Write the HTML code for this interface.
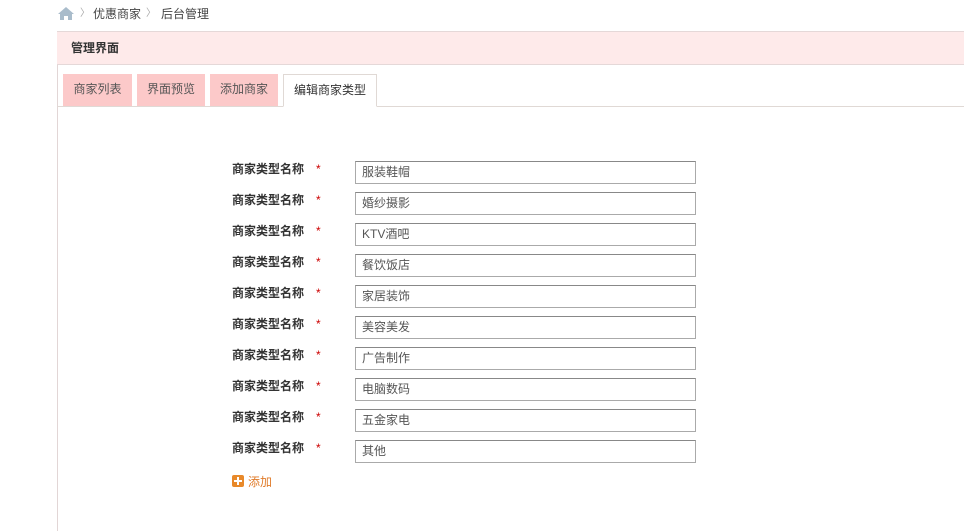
<!DOCTYPE html>
<html><head><meta charset="utf-8"><style>
*{margin:0;padding:0;box-sizing:border-box}
body{width:964px;height:521px;background:#fff;font-family:"Liberation Sans","Noto Sans CJK SC",sans-serif;font-size:12px;color:#333;position:relative;overflow:hidden}
.abs{position:absolute}
.bc{top:6px;height:16px;line-height:16px;color:#444}
.panel{left:57px;top:31px;width:920px;height:500px;border-left:1px solid #e2d6d6}
.hd{left:57px;top:31px;width:920px;height:34px;background:#feeaea;border-top:1px solid #e5d8d8;border-bottom:1px solid #e5d8d8;font-weight:bold;line-height:32px;padding-left:14px;color:#333}
.tabline{left:57px;top:106px;width:920px;border-top:1px solid #e0d9d5}
.tab{top:74px;height:32px;line-height:30px;text-align:center;background:#fcc9c9;color:#555}
.tab.on{background:#fff;border:1px solid #e0d9d5;border-bottom:1px solid #fff;height:33px;color:#333}
.lab{left:232px;font-weight:bold;color:#333;line-height:16px}
.star{left:316px;color:#c00;line-height:16px}
.inp{left:355px;width:341px;height:23px;border:1px solid #aaa;border-top-color:#888;line-height:21px;padding-left:6px;color:#555}
</style></head><body>
<div class="abs bc" style="left:58px"><svg width="16" height="13" viewBox="0 0 16 13" style="vertical-align:-2px"><path d="M8 0L0 7h2v6h4V9h4v4h4V7h2z" fill="#a9bccb"/></svg></div>
<div class="abs bc" style="left:80px;color:#aaa;font-size:10px">〉</div>
<div class="abs bc" style="left:93px">优惠商家</div>
<div class="abs bc" style="left:146px;color:#aaa;font-size:10px">〉</div>
<div class="abs bc" style="left:161px">后台管理</div>
<div class="abs panel"></div>
<div class="abs hd">管理界面</div>
<div class="abs tabline"></div>
<div class="abs tab" style="left:63px;width:69px">商家列表</div>
<div class="abs tab" style="left:137px;width:68px">界面预览</div>
<div class="abs tab" style="left:210px;width:68px">添加商家</div>
<div class="abs tab on" style="left:283px;width:94px">编辑商家类型</div>

<div class="abs lab" style="top:161px">商家类型名称</div><div class="abs star" style="top:161px">*</div><div class="abs inp" style="top:161px">服装鞋帽</div>
<div class="abs lab" style="top:192px">商家类型名称</div><div class="abs star" style="top:192px">*</div><div class="abs inp" style="top:192px">婚纱摄影</div>
<div class="abs lab" style="top:223px">商家类型名称</div><div class="abs star" style="top:223px">*</div><div class="abs inp" style="top:223px">KTV酒吧</div>
<div class="abs lab" style="top:254px">商家类型名称</div><div class="abs star" style="top:254px">*</div><div class="abs inp" style="top:254px">餐饮饭店</div>
<div class="abs lab" style="top:285px">商家类型名称</div><div class="abs star" style="top:285px">*</div><div class="abs inp" style="top:285px">家居装饰</div>
<div class="abs lab" style="top:316px">商家类型名称</div><div class="abs star" style="top:316px">*</div><div class="abs inp" style="top:316px">美容美发</div>
<div class="abs lab" style="top:347px">商家类型名称</div><div class="abs star" style="top:347px">*</div><div class="abs inp" style="top:347px">广告制作</div>
<div class="abs lab" style="top:378px">商家类型名称</div><div class="abs star" style="top:378px">*</div><div class="abs inp" style="top:378px">电脑数码</div>
<div class="abs lab" style="top:409px">商家类型名称</div><div class="abs star" style="top:409px">*</div><div class="abs inp" style="top:409px">五金家电</div>
<div class="abs lab" style="top:440px">商家类型名称</div><div class="abs star" style="top:440px">*</div><div class="abs inp" style="top:440px">其他</div>

<div class="abs" style="left:232px;top:475px;width:12px;height:12px;background:#e8892a;border-radius:2px"><div class="abs" style="left:2px;top:5px;width:8px;height:2px;background:#fff"></div><div class="abs" style="left:5px;top:2px;width:2px;height:8px;background:#fff"></div></div>
<div class="abs" style="left:248px;top:474px;color:#e07b2a;line-height:16px">添加</div>
</body></html>
